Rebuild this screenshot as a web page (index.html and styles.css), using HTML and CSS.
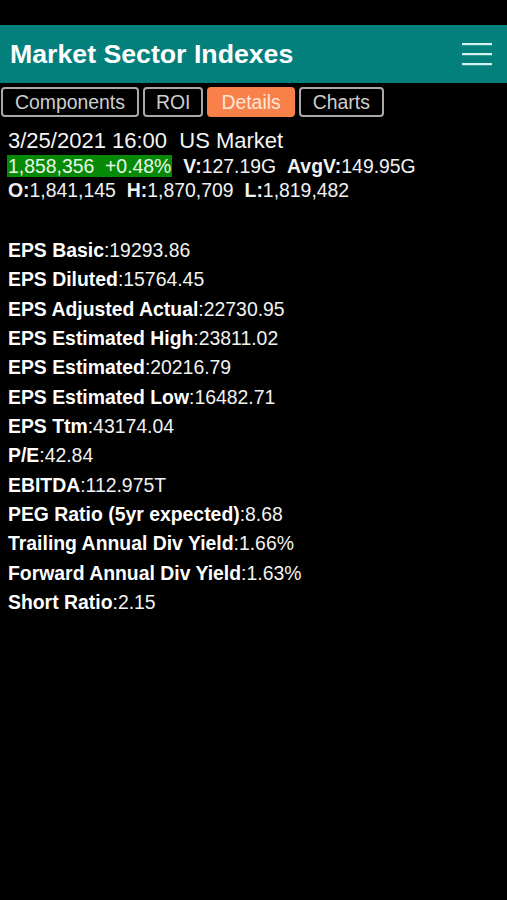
FILE: index.html
```html
<!DOCTYPE html>
<html>
<head>
<meta charset="utf-8">
<link rel="stylesheet" href="styles.css">
</head>
<body>
<div class="statusbar"></div>
<header class="appbar">
  <h1 class="title">Market Sector Indexes</h1>
  <svg class="menu" width="30" height="24" viewBox="0 0 30 24">
    <rect x="0" y="1" width="30" height="2.2" fill="#d6f2f0"/>
    <rect x="0" y="11" width="30" height="2.2" fill="#d6f2f0"/>
    <rect x="0" y="21" width="30" height="2.2" fill="#d6f2f0"/>
  </svg>
</header>
<nav class="tabs">
  <div class="tab">Components</div>
  <div class="tab narrow">ROI</div>
  <div class="tab active">Details</div>
  <div class="tab">Charts</div>
</nav>
<section class="quote">
  <div class="dateline">3/25/2021 16:00&nbsp; US Market</div>
  <div class="qline"><span class="up">1,858,356&nbsp; +0.48%</span><span class="item"><b>V:</b>127.19G</span><span class="item"><b>AvgV:</b>149.95G</span></div>
  <div class="qline"><span><b>O:</b>1,841,145</span><span class="item2"><b>H:</b>1,870,709</span><span class="item2"><b>L:</b>1,819,482</span></div>
</section>
<section class="details">
  <div class="row"><b>EPS Basic</b>:19293.86</div>
  <div class="row"><b>EPS Diluted</b>:15764.45</div>
  <div class="row"><b>EPS Adjusted Actual</b>:22730.95</div>
  <div class="row"><b>EPS Estimated High</b>:23811.02</div>
  <div class="row"><b>EPS Estimated</b>:20216.79</div>
  <div class="row"><b>EPS Estimated Low</b>:16482.71</div>
  <div class="row"><b>EPS Ttm</b>:43174.04</div>
  <div class="row"><b>P/E</b>:42.84</div>
  <div class="row"><b>EBITDA</b>:112.975T</div>
  <div class="row"><b>PEG Ratio (5yr expected)</b>:8.68</div>
  <div class="row"><b>Trailing Annual Div Yield</b>:1.66%</div>
  <div class="row"><b>Forward Annual Div Yield</b>:1.63%</div>
  <div class="row"><b>Short Ratio</b>:2.15</div>
</section>
</body>
</html>
```
FILE: styles.css
```css
html, body {
  margin: 0;
  padding: 0;
  background: #000;
  color: #f2f2f2;
  font-family: "Liberation Sans", Arial, sans-serif;
}
.statusbar {
  height: 25px;
}
.appbar {
  height: 58px;
  background: #04807c;
  display: flex;
  align-items: center;
  justify-content: space-between;
  padding: 0 15px 0 10px;
}
.title {
  margin: 0;
  font-size: 26.7px;
  font-weight: bold;
  color: #fff;
}
.menu {
  display: block;
  margin-top: 0;
}
.tabs {
  display: flex;
  gap: 4px;
  margin: 4px 0 0 1px;
}
.tab {
  height: 30px;
  box-sizing: border-box;
  border: 2px solid #a9a9a9;
  border-radius: 4px;
  padding: 0 12px;
  font-size: 19.4px;
  line-height: 26px;
  color: #cfcfcf;
  background: #000;
}
.tab.narrow {
  padding: 0 11px;
}
.tab.active {
  background: #f8814a;
  border-color: #f8814a;
  color: #ffe6d8;
}
.quote {
  margin-top: 12px;
  padding-left: 8px;
}
.dateline {
  font-size: 22px;
  line-height: 24px;
  height: 25px;
  color: #f4f4f4;
}
.qline {
  font-size: 19.4px;
  line-height: 24px;
  white-space: nowrap;
}
.up {
  background: #068a06;
  color: #e8f7e8;
  padding: 0 1px;
  margin-left: -1px;
}
.item {
  margin-left: 11px;
}
.item2 {
  margin-left: 11px;
}
.details {
  margin-top: 34px;
  padding-left: 8px;
}
.row {
  font-size: 19.4px;
  line-height: 29.33px;
  color: #f2f2f2;
  white-space: nowrap;
}
.row b {
  color: #fff;
}
```
